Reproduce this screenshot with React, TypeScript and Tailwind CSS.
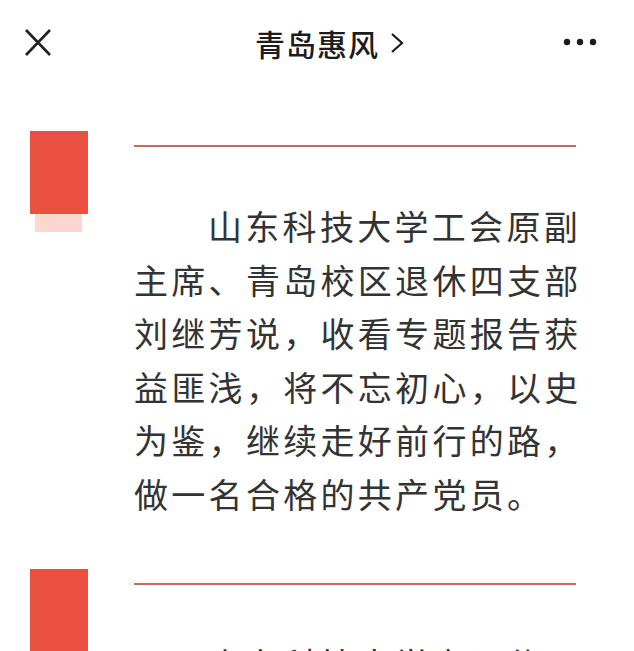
import React from "react";

const paragraphs = [
  "山东科技大学工会原副主席、青岛校区退休四支部刘继芳说，收看专题报告获益匪浅，将不忘初心，以史为鉴，继续走好前行的路，做一名合格的共产党员。",
  "山东科技大学离退休工作处党支部书记说，专题报告内容丰富，深受教育。",
];

const Section = ({ text, showShadow }: { text: string; showShadow: boolean }) => (
  <section className="flex">
    {/* Red tab */}
    <div className="pl-[30px] w-[134px] shrink-0">
      <div className="w-[58px] h-[83px] bg-[#e9503f]"></div>
      {showShadow && <div className="ml-[5px] w-[47px] h-[18px] bg-[#fdd6d1]"></div>}
    </div>

    <div className="pt-[14px]">
      <div className="w-[442px] h-[2px] bg-[#c8695c]"></div>
      <p
        className="mt-[52px] w-[460px] text-[34px] leading-[53.6px] tracking-[3.3px] indent-[74px] text-[#333333]"
        style={{ fontFamily: '"Noto Sans CJK SC", "Noto Sans", sans-serif' }}
      >
        {text}
      </p>
    </div>
  </section>
);

export default function App() {
  return (
    <div
      className="w-[634px] h-[651px] overflow-hidden bg-white"
      style={{ fontFamily: '"Noto Sans CJK SC", "Noto Sans", sans-serif' }}
    >
      {/* Top bar */}
      <header className="grid grid-cols-[1fr_auto_1fr] items-center h-[86px]">
        <div className="pl-[23px]">
          <svg width="30" height="30" viewBox="0 0 30 30" className="text-[#222]">
            <path d="M3 2 L27 27 M27 2 L3 27" stroke="currentColor" strokeWidth="2.6" fill="none" />
          </svg>
        </div>
        <div className="relative">
          <span className="block text-[30px] leading-none font-medium tracking-[1px] text-[#1c1c1c]">青岛惠风</span>
          <svg
            width="16"
            height="22"
            viewBox="0 0 16 22"
            className="absolute left-[calc(100%+10px)] top-1/2 -translate-y-1/2 text-[#1c1c1c]"
          >
            <path d="M3 2 L13 11 L3 20" stroke="currentColor" strokeWidth="2.2" fill="none" />
          </svg>
        </div>
        <div className="flex justify-end pr-[37px]">
          <svg width="34" height="8" viewBox="0 0 34 8" className="text-[#1c1c1c] -translate-y-[1px]">
            <circle cx="4" cy="4" r="3.2" fill="currentColor" />
            <circle cx="17" cy="4" r="3.2" fill="currentColor" />
            <circle cx="30" cy="4" r="3.2" fill="currentColor" />
          </svg>
        </div>
      </header>

      <div className="pt-[45px] flex flex-col gap-[48px]">
        {paragraphs.map((t, i) => (
          <Section key={i} text={t} showShadow={i === 0} />
        ))}
      </div>
    </div>
  );
}
